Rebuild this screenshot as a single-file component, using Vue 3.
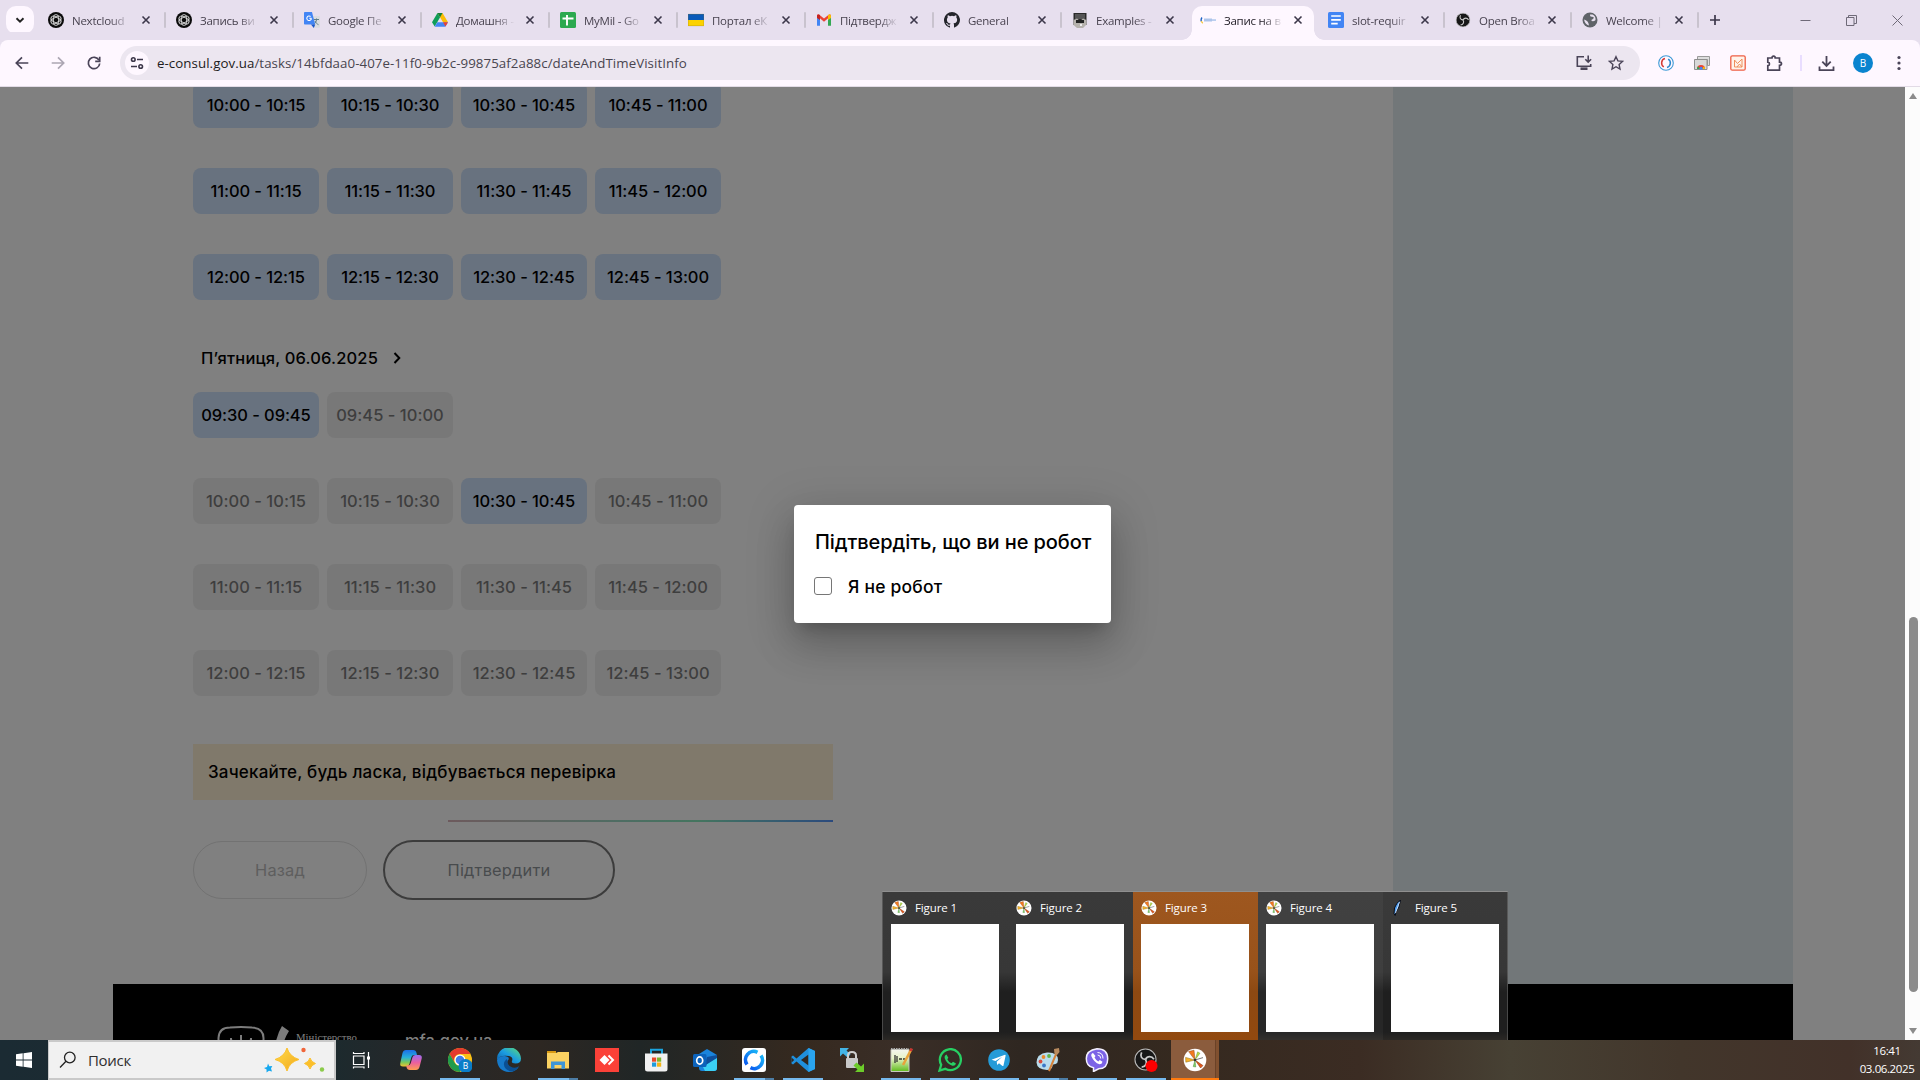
<script setup>
const tabs = [
  { icon: 'gpt', title: 'Nextcloud' },
  { icon: 'gpt', title: 'Запись ви' },
  { icon: 'translate', title: 'Google Пе' },
  { icon: 'drive', title: 'Домашня -' },
  { icon: 'sheets', title: 'MyMil - Go' },
  { icon: 'flag', title: 'Портал еК' },
  { icon: 'gmail', title: 'Підтвердж' },
  { icon: 'github', title: 'General' },
  { icon: 'examples', title: 'Examples -' },
  { icon: 'consul', title: 'Запис на в', active: true },
  { icon: 'docs', title: 'slot-requir', late: true },
  { icon: 'obs', title: 'Open Broa', late: true },
  { icon: 'globe', title: 'Welcome |', late: true },
]

const quarters = (h) => [
  `${h}:00 - ${h}:15`,
  `${h}:15 - ${h}:30`,
  `${h}:30 - ${h}:45`,
  `${h}:45 - ${h + 1}:00`,
]
const thursday = [10, 11, 12].map(quarters)
const friday = [['09:30 - 09:45', '09:45 - 10:00'], ...[10, 11, 12].map(quarters)]
const open = ['09:30 - 09:45', '10:30 - 10:45']

const previews = ['Figure 1', 'Figure 2', 'Figure 3', 'Figure 4', 'Figure 5']

const apps = [
  { id: 'taskview' },
  { id: 'copilot' },
  { id: 'chrome', run: true },
  { id: 'edge' },
  { id: 'explorer', run: true, many: true },
  { id: 'anydesk' },
  { id: 'store' },
  { id: 'outlook' },
  { id: 'sync', run: true, many: true },
  { id: 'vscode', run: true },
  { id: 'winscp' },
  { id: 'notepad', run: true },
  { id: 'whatsapp', run: true },
  { id: 'telegram', run: true },
  { id: 'paint', run: true, many: true },
  { id: 'viber', run: true },
  { id: 'obs', run: true },
  { id: 'plot', active: true },
]
</script>

<template>
  <div class="desktop">
    <svg class="defs" width="0" height="0">
      <defs>
        <linearGradient id="gEdge" x1="0" y1="1" x2="1" y2="0">
          <stop offset="0" stop-color="#0c59a4" /><stop offset=".5" stop-color="#1b9de2" /><stop offset="1" stop-color="#5fe070" />
        </linearGradient>
        <linearGradient id="gCopA" x1="0" y1="0" x2="0" y2="1">
          <stop offset="0" stop-color="#1c6ee8" /><stop offset=".45" stop-color="#27b0d8" /><stop offset=".75" stop-color="#7cc85a" /><stop offset="1" stop-color="#f2c230" />
        </linearGradient>
        <linearGradient id="gCopB" x1="0" y1="0" x2="0" y2="1">
          <stop offset="0" stop-color="#9a6cf0" /><stop offset=".5" stop-color="#ea5fa0" /><stop offset="1" stop-color="#ff9d50" />
        </linearGradient>
        <linearGradient id="gStar" x1="0" y1="0" x2="1" y2="1">
          <stop offset="0" stop-color="#ffdc4a" /><stop offset="1" stop-color="#f2a81c" />
        </linearGradient>
        <linearGradient id="gSync" x1="0" y1="1" x2="1" y2="0">
          <stop offset="0" stop-color="#0a5cf0" /><stop offset="1" stop-color="#19b4f7" />
        </linearGradient>
        <linearGradient id="gNote" x1="0" y1="0" x2="0" y2="1">
          <stop offset="0" stop-color="#f4f4ee" /><stop offset=".4" stop-color="#e7f2c8" /><stop offset="1" stop-color="#5fbb1b" />
        </linearGradient>
        <symbol id="plotIcon" viewBox="0 0 24 24">
          <circle cx="12" cy="12" r="11.3" fill="#fff" />
          <path d="M12 12 5.6 3.6 11 2.2z" fill="#f47a20" stroke="#8a4a18" stroke-width=".5" />
          <path d="M12 12 2.8 14.2 2.6 9.4z" fill="#f7b32b" stroke="#8a6a18" stroke-width=".5" />
          <path d="M12 12 20 17.6 17.6 20z" fill="#e2571c" stroke="#7a3210" stroke-width=".5" />
          <path d="M12 12 14.6 3.8 17 5.2z" fill="#b6dc45" stroke="#668022" stroke-width=".4" />
          <path d="M12 12 10.2 18.6 12.8 19z" fill="#7ed066" stroke="#3f7a30" stroke-width=".4" />
          <path d="M12 12 20 9.6" stroke="#555" stroke-width=".8" />
          <circle cx="12" cy="12" r="1.3" fill="#333" />
        </symbol>
        <symbol id="obsIcon" viewBox="0 0 24 24">
          <circle cx="12" cy="12" r="11" fill="#171717" stroke="#b9b9b9" stroke-width="1.1" />
          <g fill="none" stroke="#c9c9c9" stroke-width="1.8">
            <path d="M12.3 11.8C8 12 6 8.500 8 4.500" /><path d="M12 12c2-4 6.600-3.800 8.800-.2" /><path d="M12 12c2.400 3.700.200 7.600-4 7.900" />
          </g>
        </symbol>
      </defs>
    </svg>

    <header class="strip">
      <button class="search-tabs">
        <svg width="12" height="12" viewBox="0 0 12 12"><path d="M2.500 4.300 6 7.700l3.500-3.400" fill="none" stroke="#222" stroke-width="1.900" /></svg>
      </button>
      <div v-for="(t, i) in tabs" :key="i" class="tab" :class="{ active: t.active, late: t.late, quiet: i === 8 }">
        <i v-if="t.active" class="flare"></i>
        <svg class="fav" width="16" height="16" viewBox="0 0 16 16">
          <g v-if="t.icon === 'gpt'">
            <circle cx="8" cy="8" r="8" fill="#0b0b0b" />
            <g fill="none" stroke="#dcdcdc" stroke-width=".9">
              <rect v-for="a in [0, 60, 120]" :key="a" x="5.400" y="2.600" width="5.200" height="10.800" rx="2.600" :transform="`rotate(${a} 8 8)`" />
            </g>
          </g>
          <g v-else-if="t.icon === 'translate'">
            <path d="M6 4h9.200q.8 0 .8.800V15q0 .8-.8.800H9.500z" fill="#dadce0" />
            <path d="M10 7.500h5M12.500 6.500v1c0 2-1.500 4-3 5M11 9c.5 1.500 2 3 3.500 3.700" stroke="#5f7f88" fill="none" />
            <path d="M.8 0H8l3.200 12.500H.8Q0 12.500 0 11.700V.8Q0 0 .8 0z" fill="#4285f4" />
            <path d="m7 12.500 2.800 3.500 1.400-3.500z" fill="#1a56c8" />
            <path d="M7.500 6.300H5.300M7.400 6.400A2.300 2.300 0 1 1 6.600 4.500" fill="none" stroke="#fff" stroke-width="1.100" />
          </g>
          <g v-else-if="t.icon === 'drive'">
            <path d="M5.500 1h5L16 10.200h-5z" fill="#fbbc04" /><path d="M5.500 1 8 5.500 2.700 14.500 0 10.200z" fill="#0f9d58" />
            <path d="M5.300 10.200H16l-2.700 4.500H2.700z" fill="#4285f4" /><path d="M11 10.200h5l-2.600 4.400z" fill="#ea4335" /><path d="m5.500 1 5 0L8 5.500z" fill="#188038" />
          </g>
          <g v-else-if="t.icon === 'sheets'">
            <rect width="16" height="16" rx="1.500" fill="#2ca94f" /><path d="M2.500 6.500h11M7 3v10.500" stroke="#fff" stroke-width="1.900" />
          </g>
          <g v-else-if="t.icon === 'flag'">
            <path d="M0 2h16v6H0z" fill="#0a5ab9" /><path d="M0 8h16v6H0z" fill="#fcd200" /><path d="M.25 2.250h15.500v11.500H.25z" fill="none" stroke="#907c2a" stroke-width=".5" opacity=".6" />
          </g>
          <g v-else-if="t.icon === 'gmail'">
            <path d="M1 3.500v10.200h3V7z" fill="#4285f4" /><path d="M15 3.500v10.200h-3V7z" fill="#34a853" />
            <path d="M1 3.800Q1 2 3 2.500L8 6.500l5-4q2-.5 2 1.300L8 9.800z" fill="#ea4335" /><path d="M12 3.300 13 2.500q2-.5 2 1.300V6l-3 2z" fill="#fbbc04" /><path d="M1 3.800V6l3 2V3.300L3 2.500q-2-.4-2 1.300z" fill="#c5221f" />
          </g>
          <path v-else-if="t.icon === 'github'" fill="#24252b" d="M8 0a8 8 0 0 0-2.530 15.590c.4.070.550-.170.550-.380l-.010-1.490c-2.010.370-2.530-.490-2.690-.940-.090-.230-.480-.940-.820-1.130-.280-.150-.680-.520-.010-.530.630-.010 1.080.580 1.230.820.720 1.210 1.870.870 2.330.660.070-.520.280-.870.510-1.070-1.780-.2-3.640-.890-3.640-3.950 0-.870.310-1.590.820-2.150-.080-.2-.360-1.020.080-2.120 0 0 .670-.210 2.200.820a7.400 7.400 0 0 1 4 0c1.530-1.040 2.200-.820 2.200-.820.440 1.100.160 1.920.080 2.120.510.560.820 1.270.820 2.150 0 3.070-1.870 3.750-3.650 3.950.290.250.540.730.540 1.480l-.010 2.190c0 .210.150.460.550.380A8 8 0 0 0 8 0z" />
          <g v-else-if="t.icon === 'examples'">
            <path d="M1.500 1h13v12h-13z" fill="#2a2a2a" /><path d="M3 2h10v5H3z" fill="#555" /><path d="M1.500 8 5 6.500 8 9l3-2.500L14.500 8v4.500L11 16H5l-3.500-3z" fill="#b6b2ad" /><path d="M4 8h8v3H4z" fill="#222" /><path d="M8 12h2v2H8z" fill="#eee" />
          </g>
          <g v-else-if="t.icon === 'consul'">
            <path d="M2 5.500Q.5 7.500 1.500 9.500" fill="none" stroke="#1b62c4" stroke-width="1.400" /><path d="M1.300 9Q2 10.800 3 11" fill="none" stroke="#f5c944" stroke-width="1.300" /><path d="M4 6.500h8v3H4z" fill="#adc4ea" /><path d="M12 7.400h4v1.300h-4z" fill="#9dbce9" />
          </g>
          <g v-else-if="t.icon === 'docs'">
            <rect width="16" height="16" rx="1.500" fill="#4285f4" /><path d="M3.200 4h9.600M3.200 7.800h9.600M3.200 11.600h6.500" stroke="#fff" stroke-width="1.700" />
          </g>
          <use v-else-if="t.icon === 'obs'" href="#obsIcon" x="0.500" y="0.500" width="15" height="15" />
          <g v-else>
            <circle cx="8" cy="8" r="7.500" fill="#5f6368" /><path d="M2 7.500q2 .5 3.500 2 1 1.200 1.500 4-4-1-5-6zM8 2.500q-.5 2.500 2 2.300Q13 5 11 7q-2 .5-1.500 2 3.500.5 4-1Q14 4 10.500 2.500z" fill="#e8e0ef" />
          </g>
        </svg>
        <span class="tab-title">{{ t.title }}</span>
        <svg class="close" width="10" height="10" viewBox="0 0 10 10"><path d="m1.500 1.500 7 7m0-7-7 7" stroke="#3c374a" stroke-width="1.600" /></svg>
      </div>
      <svg class="plus" width="12" height="12" viewBox="0 0 12 12"><path d="M6 1v10M1 6h10" stroke="#3c374a" stroke-width="1.700" /></svg>
      <div class="win">
        <svg width="11" height="11" viewBox="0 0 11 11"><path d="M.5 5.500h10" stroke="#6f6a78" /></svg>
        <svg width="11" height="11" viewBox="0 0 11 11"><path d="M.5 2.500h7.500v8H.5zM2.500 2.500v-2h8v8H8" fill="none" stroke="#6f6a78" /></svg>
        <svg width="11" height="11" viewBox="0 0 11 11"><path d="m.5.5 10 10m0-10-10 10" stroke="#6f6a78" /></svg>
      </div>
    </header>

    <nav class="toolbar">
      <svg class="nav" width="16" height="16" viewBox="0 0 16 16"><path d="M14.300 8H2.500M8 2.300 2.300 8 8 13.700" fill="none" stroke="#4a4458" stroke-width="1.700" /></svg>
      <svg class="nav" width="16" height="16" viewBox="0 0 16 16"><path d="M1.700 8h11.800M8 2.300 13.700 8 8 13.700" fill="none" stroke="#aca6b3" stroke-width="1.700" /></svg>
      <svg class="nav reload" width="16" height="16" viewBox="0 0 16 16"><path d="M13 5.200A5.700 5.700 0 1 0 13.700 8.500" fill="none" stroke="#4a4458" stroke-width="1.700" /><path d="M13.700 1.800v4.600H9.200" fill="none" stroke="#4a4458" stroke-width="1.700" /></svg>
      <div class="omnibox">
        <div class="site">
          <svg width="14" height="14" viewBox="0 0 14 14" fill="none" stroke="#3c374a" stroke-width="1.600"><circle cx="3.300" cy="3.500" r="1.800" /><path d="M7 3.500h6M1 10.500h6" /><circle cx="10.700" cy="10.500" r="1.800" /></svg>
        </div>
        <div class="url"><b>e-consul.gov.ua</b>/tasks/14bfdaa0-407e-11f0-9b2c-99875af2a88c/dateAndTimeVisitInfo</div>
        <svg width="18" height="16" viewBox="0 0 18 16" fill="none" stroke="#4a4458" stroke-width="1.600"><path d="M9 1.800H2.300v9.400h13.400V9" /><path d="M5.500 13.700h7" stroke-width="2.600" /><path d="M13.200.5v6.200M10.300 4.200l2.900 2.900 2.900-2.900" /></svg>
        <svg class="star" width="16" height="16" viewBox="0 0 16 16"><path d="m8 1.700 1.900 4.200 4.600.5-3.400 3.100.9 4.500-4-2.300L4 14l.9-4.500L1.500 6.400l4.600-.5z" fill="none" stroke="#4a4458" stroke-width="1.400" /></svg>
      </div>
      <svg class="ext e1" width="16" height="16" viewBox="0 0 16 16" fill="none"><circle cx="8" cy="8" r="7.300" stroke="#3d9ad6" stroke-width="1.100" /><path d="M5.800 11.800A4.500 4.500 0 0 1 7 3.600" stroke="#d43a34" stroke-width="1.500" /><path d="M10.200 4.200A4.500 4.500 0 0 1 9 12.400" stroke="#2888cc" stroke-width="1.500" /></svg>
      <svg class="ext" width="16" height="16" viewBox="0 0 16 16"><path d="M3.500 1.500h12v9h-2v-6h-10z" fill="#ddd" stroke="#9a9a9a" /><path d="M.5 4.500h12.500v10H.5z" fill="#d9d9d9" stroke="#8e8e8e" /><path d="M3 14a4 4 0 0 1 8 0z" fill="#ea4335" /><path d="M3 14a4 4 0 0 1 1-2.700L6 14z" fill="#34a853" /><path d="M11 14a4 4 0 0 0-1-2.700L8 14z" fill="#fbbc04" /><circle cx="7" cy="13.200" r="1.500" fill="#4285f4" /></svg>
      <svg class="ext" width="16" height="16" viewBox="0 0 16 16" fill="none"><rect x=".8" y=".8" width="14.400" height="14.400" rx="1.500" fill="#fff3ea" stroke="#ee5f45" stroke-width="1.300" /><path d="M4.500 12V5l3 3.500L12 4v8M4.500 12H12M7 12l2.500-3L12 12" stroke="#ee8f5c" /></svg>
      <svg class="ext" width="17" height="17" viewBox="0 0 17 17"><path d="M1.800 3H6q0-1.800 1.600-1.800T9.200 3h4.300v4.200q2 0 2 1.600t-2 1.600v4.800H1.800v-4.500q1.700-.2 1.700-1.800T1.800 7.200z" fill="none" stroke="#4a4458" stroke-width="1.700" /></svg>
      <i class="sep"></i>
      <svg class="dl" width="17" height="17" viewBox="0 0 17 17"><path d="M8.500 1v9.500M4.300 6.700l4.200 4.200 4.200-4.200M1.500 11.500v3.700h14v-3.700" fill="none" stroke="#4a4458" stroke-width="1.800" /></svg>
      <div class="avatar">B</div>
      <svg class="dots" width="4" height="16" viewBox="0 0 4 16" fill="#4a4458"><circle cx="2" cy="2.500" r="1.600" /><circle cx="2" cy="8" r="1.600" /><circle cx="2" cy="13.500" r="1.600" /></svg>
    </nav>

    <main class="viewport">
      <div class="page">
        <div class="body">
          <section class="content">
            <div class="rows first">
              <div v-for="(row, r) in thursday" :key="r" class="row">
                <button v-for="s in row" :key="s" class="slot">{{ s }}</button>
              </div>
            </div>
            <h3 class="day">
              П’ятниця, 06.06.2025
              <svg width="8" height="12" viewBox="0 0 8 12"><path d="m1.500 1 4.800 5-4.800 5" fill="none" stroke="#000" stroke-width="2" /></svg>
            </h3>
            <div class="rows">
              <div v-for="(row, r) in friday" :key="r" class="row">
                <button v-for="s in row" :key="s" class="slot" :class="{ taken: !open.includes(s) }">{{ s }}</button>
              </div>
            </div>
            <div class="alert">Зачекайте, будь ласка, відбувається перевірка</div>
            <div class="progress"></div>
            <div class="actions">
              <button class="back">Назад</button>
              <button class="confirm">Підтвердити</button>
            </div>
          </section>
          <aside class="side"></aside>
        </div>
        <footer class="footer">
          <svg width="76" height="36" viewBox="0 0 76 36" fill="none" stroke="#7c7c7c" stroke-width="2"><path d="M1.500 36V12Q2 1.500 13 1.500 24 .5 35 1.500 46.500 2 46.500 12v24" /><path d="M14 12v24M24 9v27M34 12v24M14 13q2 10 7 12M34 13q-2 10-7 12" /><path d="M65 0 72 5q-5 8-6 15h-8Q60 8 65 0z" fill="#7c7c7c" stroke="none" /></svg>
          <span class="ministry">Міністерство</span>
          <span class="mfa">mfa.gov.ua</span>
        </footer>
      </div>
      <div class="scroll"><i class="up"></i><i class="thumb"></i><i class="down"></i></div>
      <div class="dialog">
        <h2>Підтвердіть, що ви не робот</h2>
        <label><span class="box"></span>Я не робот</label>
      </div>
    </main>

    <div class="previews">
      <div v-for="(p, i) in previews" :key="p" class="preview" :class="{ hot: i === 2, lit: i === 3 }">
        <div class="cap">
          <svg v-if="i < 4" width="16" height="16"><use href="#plotIcon" width="16" height="16" /></svg>
          <svg v-else width="16" height="16" viewBox="0 0 16 16"><path d="M9.500 0Q5 3 3.500 8L3 13.500l1.200 2 .8-3Q8.500 8 9.500 0z" fill="#4a9cf0" stroke="#0a0a12" /><path d="M8.500 2 4.500 13" stroke="#e4f0ff" stroke-width=".8" /></svg>
          {{ p }}
        </div>
        <div class="shot"></div>
      </div>
    </div>

    <footer class="taskbar">
      <div class="start"><svg width="16" height="16" viewBox="0 0 16 16" fill="#fff"><path d="M0 2.200 6.700 1.300v6.300H0zM7.500 1.200 16 0v7.600H7.500zM0 8.400h6.700v6.300L0 13.800zM7.500 8.400H16V16l-8.500-1.200z" /></svg></div>
      <div class="find">
        <svg width="18" height="18" viewBox="0 0 18 18" fill="none" stroke="#222" stroke-width="1.300"><circle cx="10.800" cy="6.500" r="5.300" /><path d="M7 10.300 1 16.500" /></svg>
        <span>Поиск</span>
        <svg class="sparkle" width="62" height="26" viewBox="0 0 62 26"><path d="M24 1q2.500 8.500 12 11.500Q26.500 15 24 24q-2.500-9-12-11.500Q21.500 9.500 24 1z" fill="url(#gStar)" stroke="#fbc02d" stroke-linejoin="round" /><path d="M47 11q1 4 5.500 5.500Q48 18 47 22q-1-4-5.500-5.500Q46 15 47 11z" fill="#fbbf2a" stroke="#fbbf2a" /><path d="m5 16.500 1.300 2.700 3-.2-1.300 2.600 1 2.900-3-.7-2.500 1.700.1-2.900-2.600-1.700 3-.9z" fill="#16a8ef" /><circle cx="40.500" cy="3" r="2.200" fill="#f0653a" /><circle cx="59" cy="22.500" r="2.200" fill="#8bcb4a" /></svg>
      </div>
      <div class="apps">
        <div v-for="a in apps" :key="a.id" class="app" :class="{ run: a.run, many: a.many, current: a.active }">
          <svg width="24" height="24" viewBox="0 0 24 24">
            <g v-if="a.id === 'taskview'" fill="none" stroke="#fff" stroke-width="1.200"><path d="M3.500 8h10.500v8.500H3.500zM3.500 4v1.500h10.500V4M3.500 20.500V19h10.500v1.500M18.500 4v16" /><path d="M17 8.500h3v3h-3z" fill="#fff" stroke="none" /></g>
            <g v-else-if="a.id === 'copilot'"><path d="M7 2h7q3 0 3.500 3l.5 2h-3q-2 0-2.600 2l-2 7q-.8 2.500-3 2.500H4Q.500 18.500 1.300 15L3.500 5Q4.300 2 7 2z" fill="url(#gCopA)" /><path d="M17 22h-6q-3 0-3.500-3L7.300 17.500H9q2 0 2.600-2l2-6.500Q14.300 7 16.500 7H20q3.500 0 2.700 3.500l-2.200 8.500Q19.700 22 17 22z" fill="url(#gCopB)" /></g>
            <g v-else-if="a.id === 'chrome'"><circle cx="12" cy="12" r="12" fill="#fbc116" /><path d="M1.600 6A12 12 0 0 1 22.400 6H12A6 6 0 0 0 6.800 15z" fill="#e33b2e" /><path d="M1.600 6 6.800 15a6 6 0 0 0 7 2.700L12 24A12 12 0 0 1 1.600 6z" fill="#219b4b" /><circle cx="12" cy="12" r="5.500" fill="#fff" /><circle cx="12" cy="12" r="4.300" fill="#3f7ee8" /><circle cx="17.500" cy="18" r="7" fill="#0a7dc8" /><text x="17.500" y="21" text-anchor="middle" fill="#fff" font-size="8.500" font-family="Open Sans, sans-serif">B</text></g>
            <g v-else-if="a.id === 'edge'"><path d="M0 12A12 12 0 0 1 24 10.500Q24 15.500 18.500 15.500 14 15.500 15 13q1.500-4-3-5Q3 6.500 0 12z" fill="url(#gEdge)" /><path d="M0 12Q2 7.500 8 8 14 9 10.500 13 9 19 17 20.500q3.500 0 5-2.300Q19 24 12 24 1 23.500 0 12z" fill="#1679c9" /><path d="M9.500 11Q4.500 16 9 21q3.500 3 7.500 2.200 4-1.500 5.500-5Q18 21 13.500 18.500 9.500 16 10.600 12.800z" fill="#0b4f92" /></g>
            <g v-else-if="a.id === 'explorer'"><path d="M1 3h9v3H1z" fill="#d99a13" /><path d="M1 5h9l2-1h11v16.500H1z" fill="#fbd262" /><path d="M5 13.500h14V21h-3.500v-4h-7v4H5z" fill="#3e95d6" /></g>
            <g v-else-if="a.id === 'anydesk'"><path d="M0 0h24v24H0z" fill="#fb4138" /><path d="M9.500 7 14.500 12l-5 5-5-5z" fill="#fff" /><path d="m13.500 7.500 4.500 4.500-4.500 4.500" fill="none" stroke="#fff" stroke-width="2" /></g>
            <g v-else-if="a.id === 'store'"><path d="M7 6V1.700h11V6" fill="none" stroke="#1ba5e0" stroke-width="2" /><path d="M1 5.500h22.500V21q0 2.500-2.500 2.500H3.500Q1 23.500 1 21z" fill="#f1f1f1" /><path d="M8 9.500h4.200v4.200H8z" fill="#e8492b" /><path d="M13 9.500h4.200v4.200H13z" fill="#7db62c" /><path d="M8 14.500h4.200v4.200H8z" fill="#1f9bdc" /><path d="M13 14.500h4.200v4.200H13z" fill="#f5b516" /></g>
            <g v-else-if="a.id === 'outlook'"><path d="m6 6 8-5 10 6v13q0 3-3 3H9q-3 0-3-3z" fill="#1a84dc" /><path d="m24 9-14 10 2 4h9q3 0 3-3z" fill="#3bd0f5" /><path d="m14 9 10-2v3l-13 8z" fill="#0e4f9c" /><rect y="6" width="13.500" height="13" rx="1.500" fill="#0c63bb" /><ellipse cx="6.700" cy="12.500" rx="3" ry="3.600" fill="none" stroke="#fff" stroke-width="1.700" /></g>
            <g v-else-if="a.id === 'sync'"><rect width="24" height="24" rx="3" fill="#fff" /><path d="M5 16.500A8.300 8.300 0 0 1 15.500 4.300" fill="none" stroke="url(#gSync)" stroke-width="3.600" /><path d="M19 7.500A8.300 8.300 0 0 1 8.500 19.700" fill="none" stroke="url(#gSync)" stroke-width="3.600" /></g>
            <g v-else-if="a.id === 'vscode'"><path d="M17.500 0 24 3v18l-6.500 3L5.500 13.500 2 16.500.5 15.500V8.500L2 7.500l3.500 3z" fill="#1f8fdc" /><path d="M17.500 6.500v11L10 12z" fill="#30261f" /><path d="M.5 9.500 3.200 12 .5 14.500z" fill="#30261f" /><path d="m17.500 0 6.500 3v18l-6.500 3z" fill="#2aa4ef" /></g>
            <g v-else-if="a.id === 'winscp'"><path d="M0 0h9L6.500 2.500l4 4-3 3-4.500-4L0 8.500z" fill="#43b4e6" /><path d="M8 11V7.500q0-3.500 4-3.500t4 3.500V11" fill="none" stroke="#cfcfcf" stroke-width="2" /><rect x="6" y="10" width="12" height="10" rx="1" fill="#c9c9c9" /><path d="M24 24h-9l2.500-2.500-4-4 3-3 4.500 4 3-3z" fill="#6ccc2a" /></g>
            <g v-else-if="a.id === 'notepad'"><path d="M2 1.500h18V23.500H2z" fill="url(#gNote)" stroke="#c9c9c0" /><path d="M2 .5h18" stroke="#aaa" stroke-width="2" stroke-dasharray="1.500 1" /><path d="M6 7v8M8 8v6M10 11h3M14 11h2" stroke="#333" stroke-width="1.300" /><path d="M22.500 1 14 17" stroke="#e8a33b" stroke-width="2.600" /><path d="m22.800.5-1.300 2.500" stroke="#c33" stroke-width="2.600" /></g>
            <g v-else-if="a.id === 'whatsapp'"><path d="M1.500 22.500 3.200 16.700A10.500 10.500 0 1 1 7.300 20.800z" fill="none" stroke="#27cf63" stroke-width="2.300" /><path d="M8.500 6.500q-2.500 1-1.700 4 2 5.500 7.500 7.200 3 .5 3.700-2.200l-3-1.700-1.500 1.500q-3-1.200-4.200-4l1-1.500z" fill="#27cf63" /></g>
            <g v-else-if="a.id === 'telegram'"><circle cx="12" cy="12" r="10.800" fill="#249bd8" /><path d="m4.500 11.700 13.500-5q.8 0 .6 1L16.500 17.500q-.3.800-1 .4L12 15.200l-1.800 1.700-.5-3.200 5.500-5L8.500 13z" fill="#fff" /></g>
            <g v-else-if="a.id === 'paint'"><path d="M11 4.500Q22 4 22 12q0 3-2.500 4-3 .2-3 2-.5 4-5.500 4Q1 21.500.5 14.500 1 5.500 11 4.500z" fill="#b9dcec" /><circle cx="4.500" cy="13.500" r="1.900" fill="#d94a3c" /><circle cx="7.500" cy="9" r="1.900" fill="#e88a2f" /><circle cx="13" cy="8" r="1.900" fill="#60b54a" /><circle cx="8" cy="17.500" r="1.900" fill="#3b78c8" /><path d="M20.500 5 13 23" stroke="#d5823a" stroke-width="2" /><path d="m18 1 5-1 .5 4-2.500 3-2.500-1z" fill="#b88a5e" /></g>
            <g v-else-if="a.id === 'viber'"><path d="M12 .8q10.700 0 10.700 10t-9 10L8.500 23.500v-3.700Q1.300 18.500 1.300 10.500T12 .8z" fill="#7c63e6" stroke="#f4f1ff" stroke-width="1.500" /><path d="M8 5q-2.500 1-1.500 3.500Q9 14.500 14.500 16.300q2.500 0 3-2.500l-2.700-1.900-1.500 1.500Q10.800 12.200 9.500 9.500L10.500 8z" fill="#fff" /><path d="M12.500 4.500q5.500.2 5.500 6M12.700 7q3 .2 3 3.500" fill="none" stroke="#fff" /></g>
            <g v-else-if="a.id === 'obs'"><use href="#obsIcon" width="23" height="23" /><circle cx="17.500" cy="18" r="6" fill="#fe0000" /></g>
            <use v-else href="#plotIcon" width="24" height="24" />
          </svg>
        </div>
      </div>
      <div class="clock"><span>16:41</span><span>03.06.2025</span></div>
    </footer>
  </div>
</template>

<style>
html, body { margin: 0; overflow: hidden; background: #808080; }
</style>

<style scoped>
* { box-sizing: border-box; }
button { border: 0; padding: 0; margin: 0; font: inherit; }
svg { display: block; flex: none; }
.defs { position: absolute; }
.desktop { position: relative; width: 1920px; height: 1080px; overflow: hidden; display: flex; flex-direction: column; font-family: "Open Sans", "Noto Sans", sans-serif; }

.strip { height: 40px; flex: none; display: flex; align-items: center; background: #e7dfee; padding-left: 6px; }
.search-tabs { width: 28px; height: 28px; margin-right: 4px; border-radius: 10px; background: #fef7ff; display: flex; align-items: center; justify-content: center; }
.tab { position: relative; width: 128px; height: 40px; flex: none; display: flex; align-items: center; padding-left: 10px; z-index: 0; }
.tab.late { width: 127px; }
.tab::after { content: ""; position: absolute; right: 0; top: 12px; width: 2px; height: 16px; background: #c9c3ce; border-radius: 1px; }
.tab.quiet::after { display: none; }
.tab.active { z-index: 1; }
.tab.active::before { content: ""; position: absolute; z-index: -1; left: 2px; top: 6px; width: 122px; height: 34px; border-radius: 10px 10px 0 0; background: #fef7ff; }
.flare::before, .flare::after, .tab.active::after { border-radius: 0; }
.flare { position: absolute; left: -8px; bottom: 0; width: 10px; height: 10px; background: radial-gradient(circle at 0 0, transparent 9.500px, #fef7ff 10px); }
.tab.active::after { left: 124px; right: auto; top: 30px; width: 10px; height: 10px; background: radial-gradient(circle at 100% 0, transparent 9.500px, #fef7ff 10px); }
.tab-title { width: 60px; margin-left: 8px; font-size: 11.500px; letter-spacing: -.25px; line-height: 16px; padding-top: 1px; color: #48424f; white-space: nowrap; -webkit-mask-image: linear-gradient(90deg, #000 38px, transparent 59px); mask-image: linear-gradient(90deg, #000 38px, transparent 59px); }
.active .tab-title { color: #1f1b24; }
.close { margin-left: 9px; }
.late .close { margin-left: 8px; }
.plus { margin-left: 10px; }
.win { margin: 0 17px 0 auto; display: flex; gap: 35px; }

.toolbar { height: 47px; flex: none; display: flex; align-items: center; padding-left: 14px; background: #fef7ff; border-bottom: 1px solid #e2dbe6; border-radius: 8px 8px 0 0; box-shadow: 0 -8px 0 0 #e7dfee; }
.nav { margin-right: 20px; }
.reload { margin-right: 18px; }
.omnibox { flex: none; width: 1520px; height: 34px; border-radius: 17px; background: #ece6f0; display: flex; align-items: center; padding: 0 16px 0 5px; }
.site { width: 24px; height: 24px; border-radius: 12px; background: #fef7ff; display: flex; align-items: center; justify-content: center; margin-right: 8px; }
.url { flex: 1; font-size: 13.300px; letter-spacing: .06px; color: #49454f; white-space: nowrap; }
.url b { font-weight: 400; color: #1d1b20; }
.star { margin-left: 15px; }
.ext { margin-right: 20px; }
.e1 { margin-left: 18px; }
.sep { width: 2px; height: 16px; background: #e9ddff; margin-right: 16px; margin-left: -3px; }
.avatar { width: 20px; height: 20px; border-radius: 50%; background: #0a84cf; color: #fff; font-size: 10px; line-height: 20px; text-align: center; margin: 0 24px 0 18px; }

.viewport { position: relative; height: 953px; flex: none; display: flex; overflow: hidden; background: #808080; font-family: Inter, "Noto Sans", sans-serif; }
.page { flex: 1; padding: 0 112px 0 113px; }
.body { height: 897px; display: flex; justify-content: space-between; }
.content { padding-left: 80px; margin-top: -5px; }
.rows { display: flex; flex-direction: column; gap: 40px; }
.row { display: flex; gap: 8px; }
.slot { width: 126px; height: 46px; border-radius: 8px; background: #68727f; color: #000; font-size: 16.500px; font-weight: 500; letter-spacing: -.08px; text-align: center; }
.taken { background: #787878; color: #3e3e3e; font-weight: 450; letter-spacing: .02px; }
.day { margin: 46px 0 22px 8px; height: 24px; display: flex; align-items: center; gap: 15px; font-size: 16.500px; font-weight: 500; letter-spacing: .15px; }
.alert { width: 640px; height: 56px; margin-top: 48px; padding-left: 15px; display: flex; align-items: center; background: #80796b; font-size: 17px; font-weight: 500; letter-spacing: .2px; }
.progress { width: 385px; height: 2px; margin: 20px 0 18px 255px; background: linear-gradient(90deg, #6d5a5d, #4e6d63 45%, #44755f 65%, #2b4a7d); }
.actions { display: flex; align-items: center; gap: 16px; font-size: 16.400px; letter-spacing: .2px; }
.actions button { background: none; letter-spacing: inherit; }
.back { width: 174px; height: 58px; border: 1px solid #727272 !important; border-radius: 29px; color: #5e5e5e; }
.confirm { width: 232px; height: 60px; border: 2px solid #3c3c3c !important; border-radius: 30px; color: #484b4d; }
.side { width: 400px; background: #727779; }
.footer { height: 56px; padding: 42px 0 0 104px; background: #000; display: flex; align-items: flex-start; color: #808080; white-space: nowrap; overflow: hidden; }
.ministry { margin: 4px 0 0 3px; width: 60px; font: 10.800px/14px "Liberation Serif", serif; }
.mfa { margin: 3px 0 0 49px; font-size: 16.400px; font-weight: 500; line-height: 22px; }

.scroll { width: 15px; background: #fcfcfc; display: flex; flex-direction: column; align-items: center; }
.up { margin-top: 6px; border: 4.500px solid transparent; border-top: 0; border-bottom: 6px solid #8b8b8b; }
.thumb { margin: 518px 0 0 1px; width: 9px; height: 375px; border-radius: 5px; background: #8b8b8b; }
.down { margin-top: 36px; border: 4.500px solid transparent; border-bottom: 0; border-top: 6px solid #8b8b8b; }

.dialog { position: absolute; left: 794px; top: 418px; width: 317px; height: 118px; padding: 22px 20px 0; border-radius: 4px; background: #fff; box-shadow: 0 11px 15px -7px rgba(0,0,0,.2), 0 24px 38px 3px rgba(0,0,0,.14), 0 9px 46px 8px rgba(0,0,0,.12); color: #000; }
.dialog h2 { margin: 0 0 0 1px; font-size: 20px; line-height: 30px; font-weight: 500; letter-spacing: -.09px; white-space: nowrap; }
.dialog label { display: flex; align-items: center; margin-top: 17px; height: 24px; font-size: 17.500px; font-weight: 500; letter-spacing: .2px; }
.box { width: 18px; height: 18px; margin-right: 16px; border: 1px solid #767676; border-radius: 3px; }

.previews { position: absolute; left: 882px; top: 891px; width: 626px; height: 149px; display: flex; border: 1px solid #8a8a8a66; border-top-color: #8f8f8f; border-bottom: 0; background: linear-gradient(#3a3a3a 0, #373737 80px, #1f1f1f 100px, #1f1f1f 140px, #2b2825); }
.preview { flex: none; width: 125px; padding: 5px 0 0 8px; }
.preview:last-child { width: 124px; }
.hot { background: linear-gradient(#9e571f 0, #98521a 80px, #8d4912 100px, #92490f); }
.lit { background: rgba(255,255,255,.04); }
.cap { height: 21px; margin-bottom: 6px; display: flex; align-items: center; gap: 8px; color: #fff; font-size: 11.500px; letter-spacing: -.12px; white-space: nowrap; }
.shot { width: 108px; height: 108px; background: #fff; }

.taskbar { height: 40px; flex: none; display: flex; background: linear-gradient(90deg, #1b2b33 0, #1c2a2e 330px, #24282a 400px, #2d2722 540px, #202626 640px, #35291f 800px, #3a2e27 900px, #2f2721 1020px, #35291f 1180px, #3b2c23 1360px, #474134 1510px, #42362b 1680px, #423129 1850px, #443a33); }
.start { width: 48px; display: flex; align-items: center; justify-content: center; }
.find { width: 288px; margin: 0; border: 2px solid #c9c9c9; border-left-width: 1px; background: #f1f1f1; display: flex; align-items: center; padding: 0 9px 0 10px; color: #2f2f2f; font-size: 15px; letter-spacing: -.3px; }
.find span { margin-left: 11px; }
.sparkle { margin-left: auto; }
.apps { display: flex; padding-left: 1px; }
.app { position: relative; width: 49.050px; display: flex; align-items: center; justify-content: center; }
.app.run::after { content: ""; position: absolute; bottom: 0; left: 4.500px; width: 40px; height: 2px; background: #76b9ed; }
.app.many::after { background: linear-gradient(90deg, #76b9ed 31px, #4d7da5 31px); }
.app.current { width: 48px; background: linear-gradient(90deg, #8b5c3d 44px, #6b4227 44px, #6b4227 45px, #80502f 45px); }
.app.current::after { content: ""; position: absolute; bottom: 0; left: 0; width: 48px; height: 2px; background: #ff7a0e; }
.clock { margin-left: auto; margin-right: -1px; width: 68px; display: flex; flex-direction: column; align-items: center; color: #fff; font-size: 11.500px; line-height: 18px; padding-top: 2px; letter-spacing: -.4px; }
</style>
